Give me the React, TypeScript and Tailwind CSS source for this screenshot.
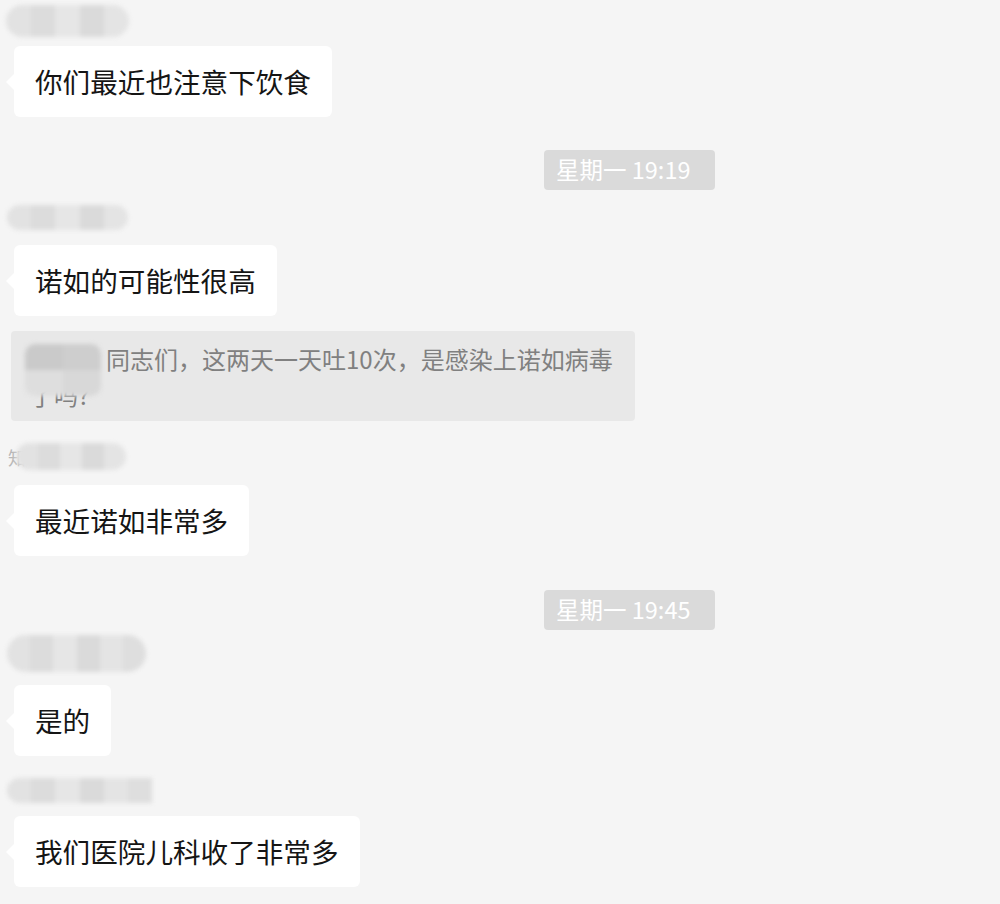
const FONT = { fontFamily: '"Microsoft YaHei", "Noto Sans CJK SC", "Noto Sans", sans-serif' };

// blurred name placeholder (mosaic)
const BlurName = ({ width, height, className = "" }: { width: number; height: number; className?: string }) => {
  const cells = Math.max(3, Math.round(width / 24));
  const tones = ["#e2e2e2", "#dcdcdc", "#e6e6e6", "#dadada", "#e4e4e4", "#dedede", "#e8e8e8"];
  return (
    <div className={`flex overflow-hidden rounded-full blur-[2px] ${className}`} style={{ width, height }}>
      {Array.from({ length: cells }).map((_, i) => (
        <div key={i} className="flex-1 h-full" style={{ background: tones[i % tones.length] }} />
      ))}
    </div>
  );
};

const Bubble = ({ text, className = "" }: { text: string; className?: string }) => (
  <div className={`relative self-start ${className}`}>
    <div className="absolute left-[-8px] top-1/2 -translate-y-1/2 w-0 h-0 border-y-[8px] border-y-transparent border-r-[8px] border-r-white" />
    <div className="h-[71px] flex items-center px-[21px] bg-white rounded-[6px] text-[27.6px] text-[#151515] leading-none">
      {text}
    </div>
  </div>
);

const Time = ({ text, className = "" }: { text: string; className?: string }) => (
  <div className={`self-start ml-[530px] h-[40px] w-[171px] flex items-center px-[12px] bg-[#dadada] rounded-[4px] text-white text-[23.5px] leading-none ${className}`}>
    {text}
  </div>
);

export default function App() {
  return (
    <div className="w-[1000px] h-[904px] bg-[#f5f5f5] overflow-hidden flex flex-col px-[14px]" style={FONT}>
      <BlurName width={123} height={32} className="mt-[5px] ml-[-8px]" />
      <Bubble text="你们最近也注意下饮食" className="mt-[9px]" />

      <Time text="星期一 19:19" className="mt-[33px]" />

      <BlurName width={121} height={25} className="mt-[15px] ml-[-7px]" />
      <Bubble text="诺如的可能性很高" className="mt-[15px]" />

      <div className="mt-[15px] ml-[-3px] w-[624px] h-[90px] bg-[#e8e8e8] rounded-[4px] relative px-[19px] pt-[10px] text-[24px] leading-[36px] text-[#808080]">
        <div className="absolute left-[14px] top-[13px] w-[76px] h-[52px] grid grid-cols-2 grid-rows-2 blur-[2px] rounded-[10px] overflow-hidden">
          <div className="bg-[#cacaca]" />
          <div className="bg-[#cecece]" />
          <div className="bg-[#dedede]" />
          <div className="bg-[#d8d8d8]" />
        </div>
        <span className="inline-block w-[76px]" />
        同志们，这两天一天吐10次，是感染上诺如病毒了吗?
      </div>

      <div className="mt-[22px] h-[27px] flex items-center ml-[-6px]">
        <span className="text-[18px] leading-none text-[#b8b8b8]">知</span>
        <BlurName width={110} height={27} className="ml-[-10px]" />
      </div>
      <Bubble text="最近诺如非常多" className="mt-[15px]" />

      <Time text="星期一 19:45" className="mt-[34px]" />

      <BlurName width={139} height={37} className="mt-[5px] ml-[-7px]" />
      <Bubble text="是的" className="mt-[13px]" />

      <BlurName width={145} height={25} className="mt-[22px] ml-[-7px] rounded-l-full rounded-r-none" />
      <Bubble text="我们医院儿科收了非常多" className="mt-[13px]" />
    </div>
  );
}
